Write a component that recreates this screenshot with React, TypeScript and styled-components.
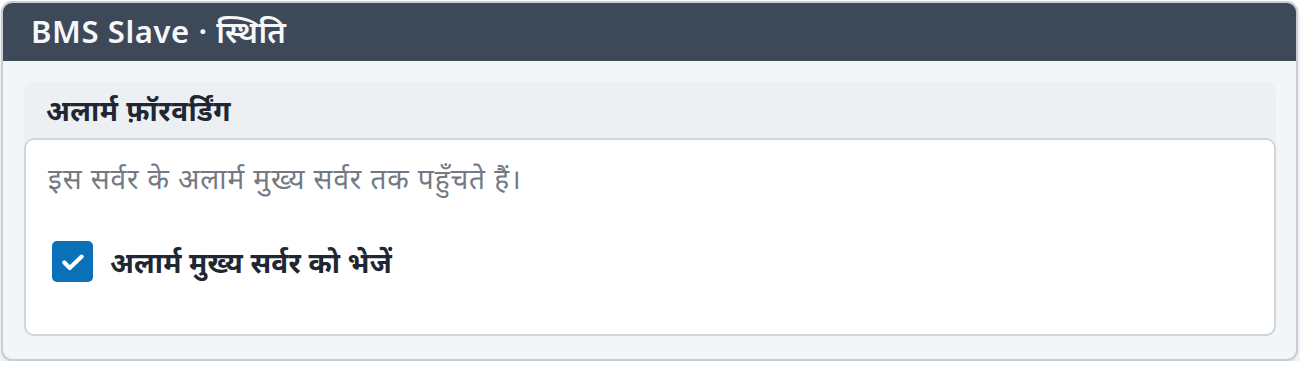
import React from 'react';
import styled, { createGlobalStyle } from 'styled-components';

const GlobalStyle = createGlobalStyle`
    html, body {
        margin: 0;
        padding: 0;
        background: #ffffff;
    }
    body {
        font-family: 'Noto Sans', 'Noto Sans Devanagari', 'Liberation Sans', sans-serif;
    }
`;

const Panel = styled.section`
    margin: 1px 2px 0 1px;
    width: 1297px;
    height: 360px;
    box-sizing: border-box;
    border: 2px solid #c8ced7;
    border-radius: 11px;
    background: #f3f5f7;
    overflow: hidden;
    display: flex;
    flex-direction: column;
    box-shadow: 0 6px 10px rgba(30, 40, 55, 0.14);
`;

const PanelHeader = styled.header`
    height: 58px;
    flex: none;
    background: #3d4958;
    display: flex;
    align-items: center;
    padding: 0 28px 3px;
    box-sizing: border-box;
    color: #f6f7f9;
    font-size: 31px;
    font-weight: 600;
    letter-spacing: 0.6px;
`;

const PanelBody = styled.div`
    flex: 1;
    padding: 21px 20px 23px 21px;
    display: flex;
`;

const Section = styled.div`
    flex: 1;
    display: flex;
    flex-direction: column;
    background: #edf0f3;
    border-radius: 10px;
`;

const SectionTitle = styled.h2`
    margin: 0;
    height: 56px;
    flex: none;
    display: flex;
    align-items: center;
    padding: 0 22px;
    font-size: 28px;
    font-weight: 700;
    color: #1f2733;
    letter-spacing: 0.5px;
`;

const SectionContent = styled.div`
    flex: 1;
    background: #ffffff;
    border: 2px solid #cfd6de;
    border-radius: 10px;
    padding: 18px 22px 0 22px;
    display: flex;
    flex-direction: column;
    gap: 43px;
`;

const Note = styled.p`
    margin: 0;
    font-size: 28px;
    color: #737a84;
    line-height: 40px;
    letter-spacing: 0.9px;
`;

const CheckRow = styled.label`
    display: flex;
    align-items: center;
    gap: 17px;
    padding-left: 4px;
    font-size: 28px;
    font-weight: 700;
    color: #1f2733;
    letter-spacing: 0.2px;
    cursor: pointer;
`;

const Box = styled.span<{ checked?: boolean }>`
    width: 41px;
    height: 41px;
    flex: none;
    border-radius: 5px;
    background: ${({ checked }) => (checked ? '#0a71b9' : '#ffffff')};
    border: ${({ checked }) => (checked ? 'none' : '2px solid #cfd6de')};
    display: flex;
    align-items: center;
    justify-content: center;
`;

export default function App() {
    return (
        <>
            <GlobalStyle />
            <Panel>
                <PanelHeader>BMS Slave · स्थिति</PanelHeader>
                <PanelBody>
                    <Section>
                        <SectionTitle>अलार्म फ़ॉरवर्डिंग</SectionTitle>
                        <SectionContent>
                            <Note>इस सर्वर के अलार्म मुख्य सर्वर तक पहुँचते हैं।</Note>
                            <CheckRow>
                                <Box checked>
                                    <svg width="26" height="26" viewBox="0 0 24 24" fill="none">
                                        <path d="M4 12.5l5 5L20 7" stroke="#fff" strokeWidth="3.8" strokeLinecap="round" strokeLinejoin="round" />
                                    </svg>
                                </Box>
                                अलार्म मुख्य सर्वर को भेजें
                            </CheckRow>
                        </SectionContent>
                    </Section>
                </PanelBody>
            </Panel>
        </>
    );
}
